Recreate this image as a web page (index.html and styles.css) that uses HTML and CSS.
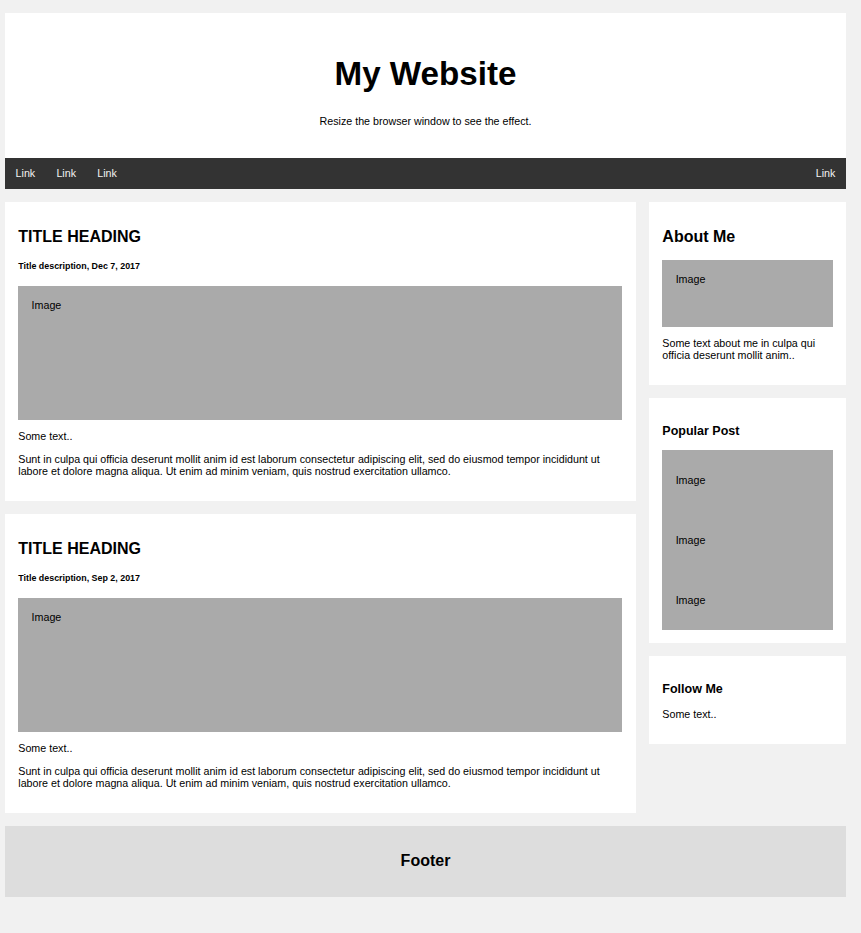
FILE: index.html
```
<!DOCTYPE html>
<html lang="en">
<head>
  <meta charset="UTF-8" />
  <meta name="viewport" content="width=device-width, initial-scale=1.0" />
  <title>My Website</title>
  <link rel="stylesheet" href="styles.css">
</head>
<body>
  <div class="header">
    <h1>My Website</h1>
    <p>Resize the browser window to see the effect.</p>
  </div>

  <div class="topnav">
    <a href="#">Link</a>
    <a href="#">Link</a>
    <a href="#">Link</a>
    <a href="#" class="right">Link</a>
  </div>

  <div class="row">
    <div class="leftcolumn">
      <div class="card">
        <h2>TITLE HEADING</h2>
        <h5>Title description, Dec 7, 2017</h5>
        <div class="fakeimg big">Image</div>
        <p>Some text..</p>
        <p>Sunt in culpa qui officia deserunt mollit anim id est laborum consectetur adipiscing elit, sed do eiusmod tempor incididunt ut labore et dolore magna aliqua. Ut enim ad minim veniam, quis nostrud exercitation ullamco.</p>
      </div>
      <div class="card">
        <h2>TITLE HEADING</h2>
        <h5>Title description, Sep 2, 2017</h5>
        <div class="fakeimg big">Image</div>
        <p>Some text..</p>
        <p>Sunt in culpa qui officia deserunt mollit anim id est laborum consectetur adipiscing elit, sed do eiusmod tempor incididunt ut labore et dolore magna aliqua. Ut enim ad minim veniam, quis nostrud exercitation ullamco.</p>
      </div>
    </div>
    <div class="rightcolumn">
      <div class="card">
        <h2>About Me</h2>
        <div class="fakeimg small">Image</div>
        <p>Some text about me in culpa qui officia deserunt mollit anim..</p>
      </div>
      <div class="card">
        <h3>Popular Post</h3>
        <div class="fakeimg"><p>Image</p></div>
        <div class="fakeimg"><p>Image</p></div>
        <div class="fakeimg"><p>Image</p></div>
      </div>
      <div class="card">
        <h3>Follow Me</h3>
        <p>Some text..</p>
      </div>
    </div>
  </div>

  <div class="footer">
    <h2>Footer</h2>
  </div>
</body>
</html>
```

FILE: styles.css
```
* {
  box-sizing: border-box;
}

body {
  margin: 0;
  padding: 13px 15px 13px 5px;
  font-family: "Liberation Sans", Arial, sans-serif;
  font-size: 10.7px;
  background: #f1f1f1;
  color: #000;
}

p {
  margin: 10.6px 0;
}

.header {
  padding: 20px;
  text-align: center;
  background: white;
}

.header h1 {
  font-size: 33.2px;
  margin: 22.2px 0;
}

.topnav {
  display: flex;
  background-color: #333;
}

.topnav a {
  display: block;
  color: #f2f2f2;
  padding: 9.3px 10.6px;
  text-decoration: none;
}

.topnav a.right {
  margin-left: auto;
}

.row {
  display: flex;
  align-items: flex-start;
}

.leftcolumn {
  width: 75%;
}

.rightcolumn {
  width: 25%;
  padding-left: 13.3px;
}

.card {
  background-color: white;
  padding: 13.2px 13.3px;
  margin-top: 13.2px;
}

.card h2 {
  font-size: 16px;
  margin: 13.5px 0;
}

.card h3 {
  font-size: 12.5px;
  margin: 12.5px 0;
}

.card h5 {
  font-size: 8.9px;
  margin: 14.6px 0;
}

.fakeimg {
  background-color: #aaa;
  width: 100%;
  padding: 13.3px;
}

.fakeimg.big {
  height: 134px;
}

.fakeimg.small {
  height: 66.6px;
}

.footer {
  padding: 13.3px;
  text-align: center;
  background: #ddd;
  margin-top: 13.2px;
}

.footer h2 {
  font-size: 16px;
  margin: 13.3px 0;
}
```
